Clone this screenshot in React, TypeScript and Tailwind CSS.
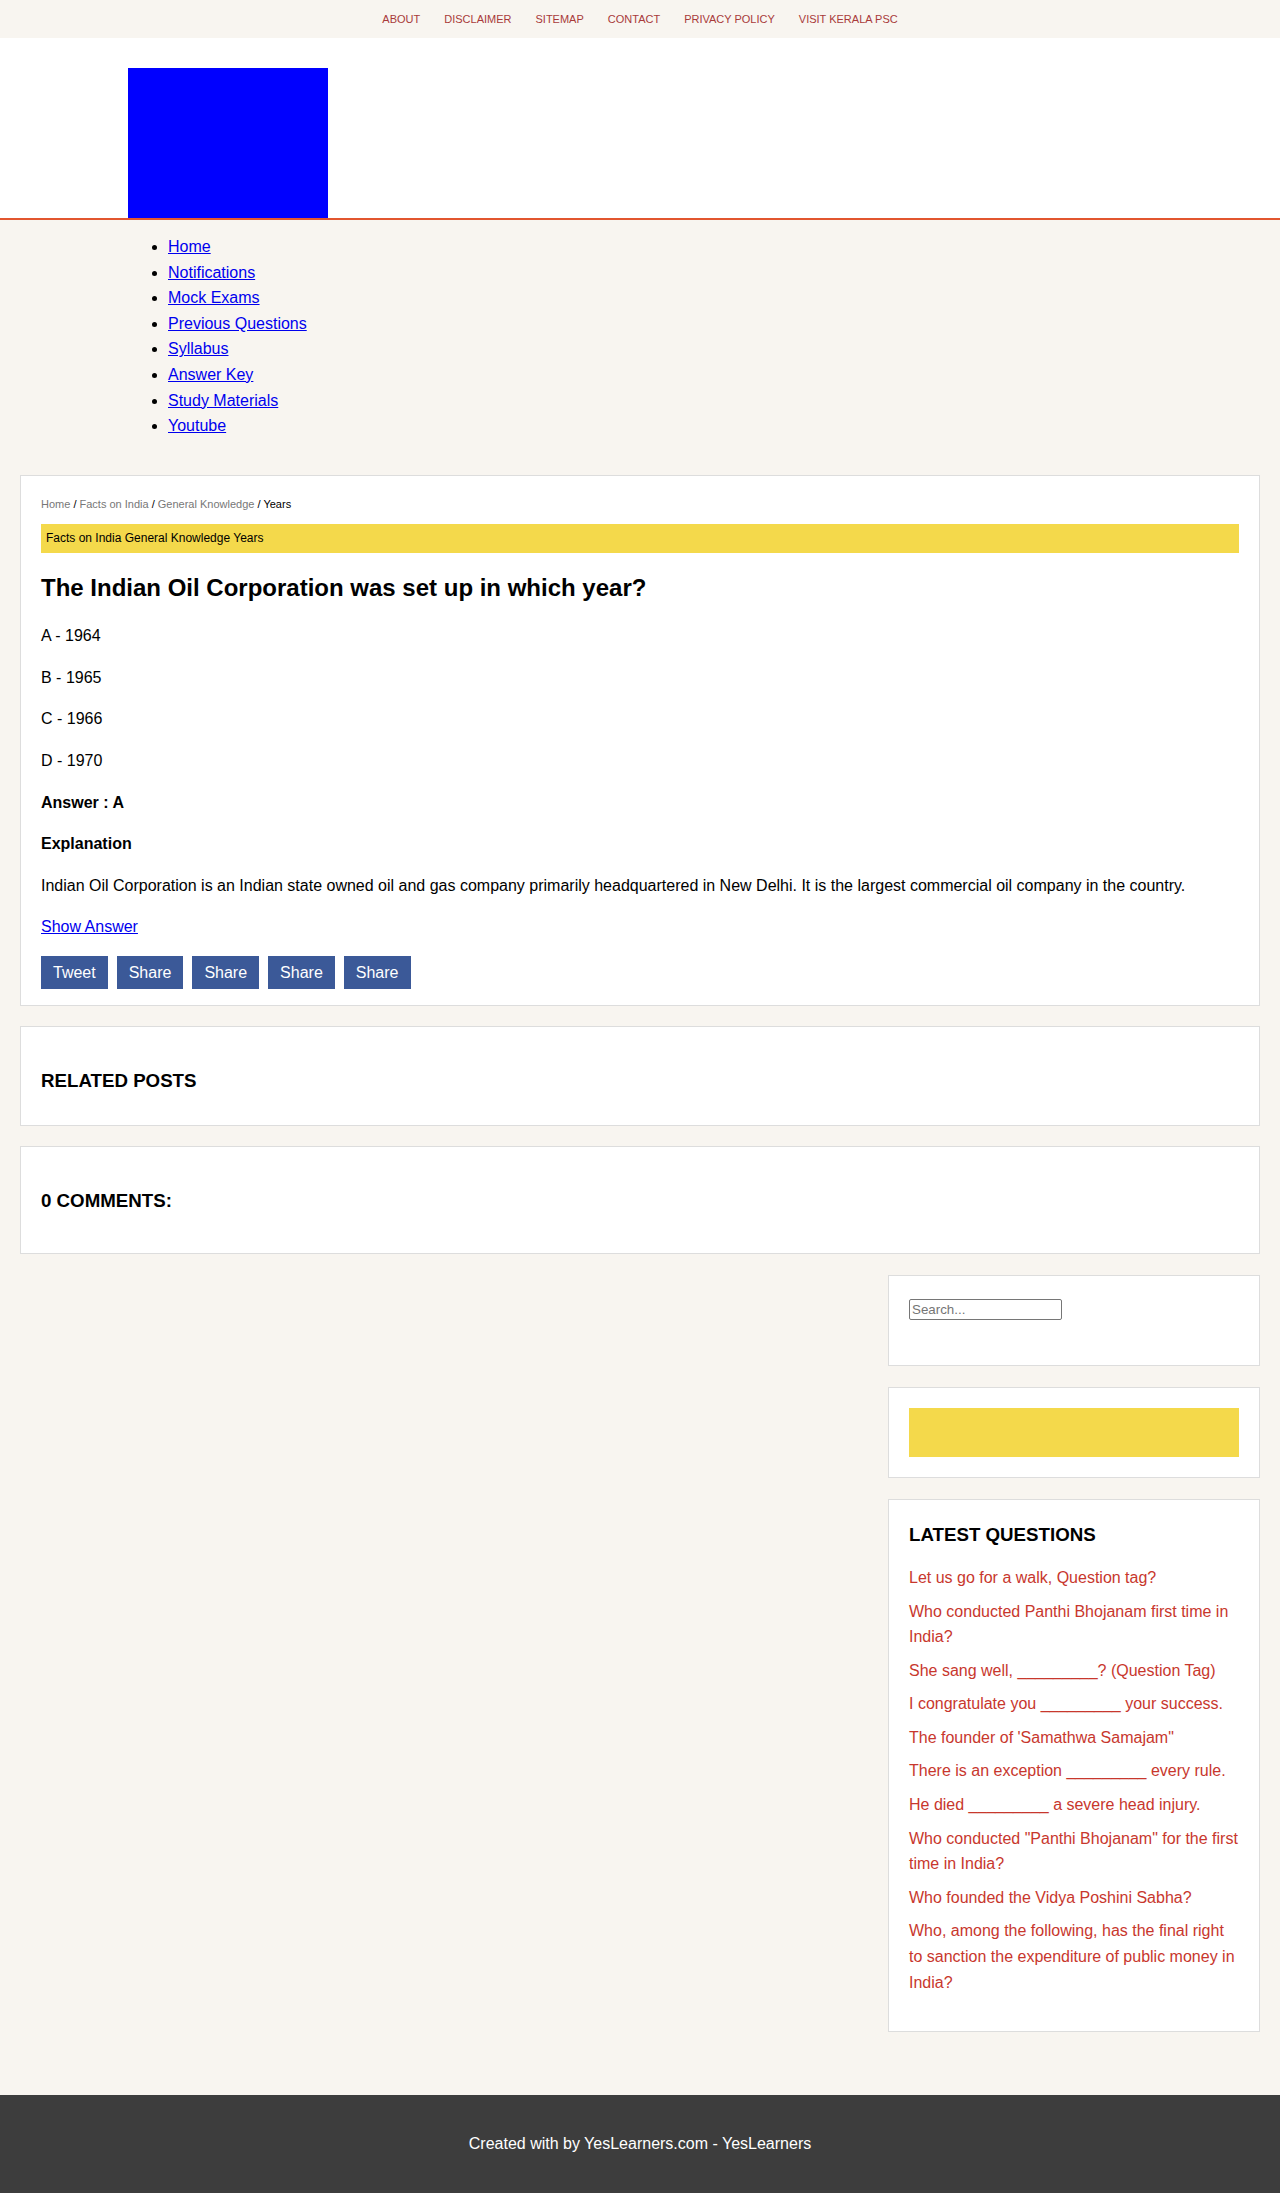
import React from "react";

const topLinks = ["About", "Disclaimer", "Sitemap", "Contact", "Privacy Policy", "Visit Kerala PSC"];
const navLinks = ["Home", "Notifications", "Mock Exams", "Previous Questions", "Syllabus", "Answer Key", "Study Materials", "Youtube"];
const latest = [
  "Let us go for a walk, Question tag?",
  "Who conducted Panthi Bhojanam first time in India?",
  "She sang well, _________? (Question Tag)",
  "I congratulate you _________ your success.",
  "The founder of 'Samathwa Samajam\"",
  "There is an exception _________ every rule.",
  "He died _________ a severe head injury.",
  "Who conducted \"Panthi Bhojanam\" for the first time in India?",
  "Who founded the Vidya Poshini Sabha?",
  "Who, among the following, has the final right to sanction the expenditure of public money in India?",
];

export default function App() {
  return (
    <div className="min-h-[2193px] flex flex-col bg-[#f8f5f0] text-black font-['Liberation_Sans',Arial,Helvetica,sans-serif] text-[16px] leading-[25.6px]">
      {/* top bar */}
      <div className="h-[38px] flex items-center justify-center bg-[#f8f5f0]">
        {topLinks.map((l) => (
          <a key={l} href="#" className="px-3 text-[11px] leading-[16px] uppercase text-[#a83a3a]">
            {l}
          </a>
        ))}
      </div>

      {/* header */}
      <header className="bg-white border-b-2 border-[#e2562f]">
        <div className="max-w-[1024px] mx-auto pt-[30px]">
          <div className="w-[200px] h-[150px] bg-[#0000ff]" />
        </div>
      </header>

      {/* nav list */}
      <nav className="max-w-[1024px] w-full mx-auto">
        <ul className="list-disc pl-10 mt-[14px] mb-4">
          {navLinks.map((l) => (
            <li key={l}>
              <a href="#" className="text-[#0000ee] underline">
                {l}
              </a>
            </li>
          ))}
        </ul>
      </nav>

      {/* main */}
      <main className="px-5 pt-5 pb-[40px] flex-1">
        <article className="bg-white border border-[#dddddd] px-5 pt-5 pb-4">
          <div className="text-[11px] leading-[17px]">
            <a href="#" className="text-[#777777]">Home</a> / <a href="#" className="text-[#777777]">Facts on India</a> /{" "}
            <a href="#" className="text-[#777777]">General Knowledge</a> / <span>Years</span>
          </div>
          <div className="mt-[11px] bg-[#f4d94b] py-[5px] pl-[5px] text-[12px] leading-[19px]">
            Facts on India General Knowledge Years
          </div>
          <h1 className="my-4 text-[24px] leading-[38.4px] font-bold">
            The Indian Oil Corporation was set up in which year?
          </h1>
          <p className="mb-4">A - 1964</p>
          <p className="mb-4">B - 1965</p>
          <p className="mb-4">C - 1966</p>
          <p className="mb-4">D - 1970</p>
          <p className="mb-4 font-bold">Answer : A</p>
          <p className="mb-4 font-bold">Explanation</p>
          <p className="mb-4">
            Indian Oil Corporation is an Indian state owned oil and gas company primarily headquartered in New Delhi. It is the largest commercial oil company in the country.
          </p>
          <p className="mb-4">
            <a href="#" className="text-[#0000ee] underline">Show Answer</a>
          </p>
          <div className="flex gap-[9px]">
            {["Tweet", "Share", "Share", "Share", "Share"].map((b, i) => (
              <a key={i} href="#" className="block bg-[#3b5998] text-white px-3 py-[4px] leading-[25px]">
                {b}
              </a>
            ))}
          </div>
        </article>

        <section className="mt-5 bg-white border border-[#dddddd] p-5">
          <h3 className="mt-[19px] mb-[9px] text-[18.72px] leading-[30px] font-bold">RELATED POSTS</h3>
        </section>

        <section className="mt-5 bg-white border border-[#dddddd] p-5">
          <h3 className="mt-[19px] mb-[17px] text-[18.72px] leading-[30px] font-bold">0 COMMENTS:</h3>
        </section>

        <aside className="w-[30%] ml-auto mt-[21px]">
          <div className="bg-white border border-[#dddddd] p-5">
            <div className="h-[49px] pt-[3px]">
              <input
                type="text"
                placeholder="Search..."
                className="block w-[153px] h-[21px] border border-[#767676] rounded-[2px] px-[2px] text-[13.33px] leading-[16px] bg-white placeholder:text-[#757575] font-['Liberation_Sans',Arial,sans-serif]"
              />
            </div>
          </div>

          <div className="mt-[21px] bg-white border border-[#dddddd] p-5">
            <div className="h-[49px] bg-[#f4d94b]" />
          </div>

          <div className="mt-[21px] bg-white border border-[#dddddd] px-5 pt-5 pb-[36px]">
            <h3 className="mb-[15px] text-[18.72px] leading-[30px] font-bold">LATEST QUESTIONS</h3>
            <ul className="flex flex-col gap-[8px]">
              {latest.map((q, i) => (
                <li key={i}>
                  <a href="#" className="text-[#c8372d]">
                    {q}
                  </a>
                </li>
              ))}
            </ul>
          </div>
        </aside>
      </main>

      <footer className="bg-[#3d3d3d] text-white text-center py-9">
        Created with by YesLearners.com - YesLearners
      </footer>
    </div>
  );
}
